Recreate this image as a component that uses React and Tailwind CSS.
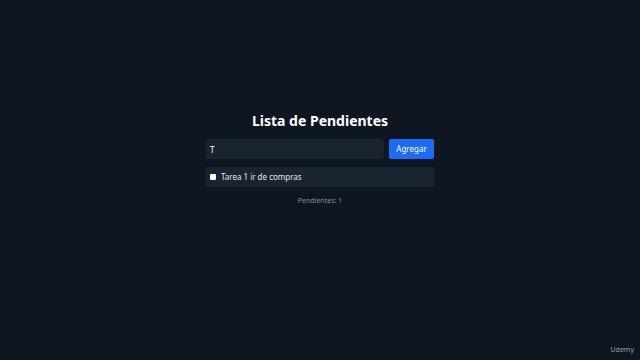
import { useState } from 'react';

export default function App() {
  const [text, setText] = useState('T');
  const [todos, setTodos] = useState([{ id: 1, title: 'Tarea 1 ir de compras', done: false }]);

  const pending = todos.filter(t => !t.done).length;

  return (
    <div className="w-[640px] h-[360px] bg-[#0e1622] flex flex-col items-center pt-[112px] relative" style={{ fontFamily: '"Noto Sans", "Open Sans", sans-serif' }}>
      <h1 className="text-[14px] font-bold text-white leading-[18px]">Lista de Pendientes</h1>
      <div className="w-[228px] mt-[9px]">
        <div className="flex gap-[5px]">
          <input
            value={text}
            onChange={e => setText(e.target.value)}
            className="flex-1 min-w-0 h-[20px] bg-[#1a2431] rounded-[2px] px-[4px] text-[8px] text-white focus:outline-none"
          />
          <button className="w-[45px] h-[20px] bg-[#1b6bf5] rounded-[2px] text-[8px] text-white">Agregar</button>
        </div>
        <div className="mt-[8px] h-[20px] bg-[#1a2431] rounded-[2px] flex items-center px-[4px] gap-[5px]">
          <span className="w-[6px] h-[6px] bg-white rounded-[1px]" />
          <span className="text-[8px] text-[#e5e7eb]">{todos[0].title}</span>
        </div>
        <p className="mt-[9px] text-center text-[7px] text-[#858c96]">Pendientes: {pending}</p>
      </div>
      <span className="absolute right-[6px] bottom-[5px] text-[7px] text-[#9aa0a8]">Udemy</span>
    </div>
  );
}
